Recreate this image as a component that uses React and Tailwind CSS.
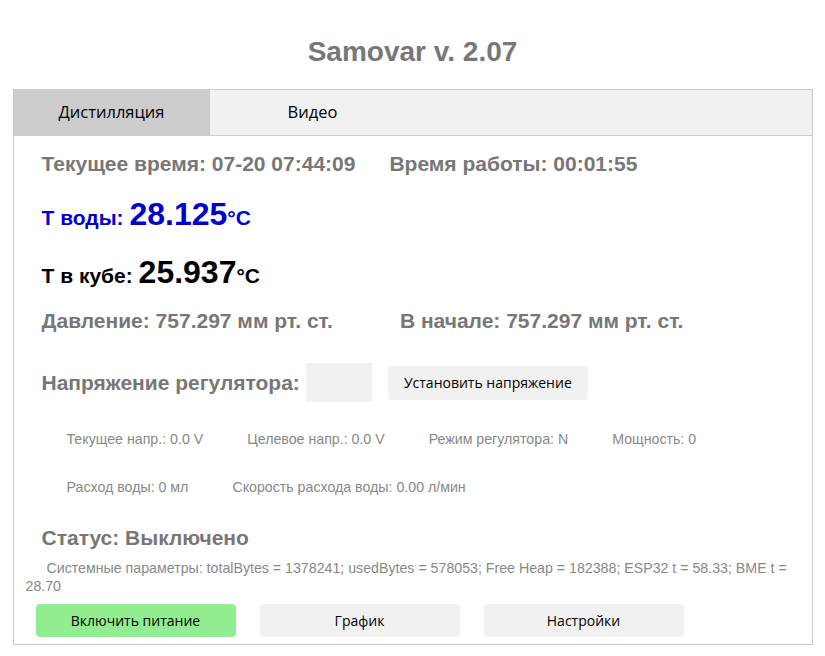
import React from 'react';

const gray = 'text-[#777777]';

const App = () => {
  return (
    <div className="min-h-screen bg-white font-['Liberation_Sans',Arial,sans-serif]">
      <h1 className={`pt-[35px] text-center text-[28px] leading-[34px] font-bold ${gray}`}>Samovar v. 2.07</h1>

      <div className="mx-auto mt-[20px] w-[800px] border border-[#cccccc]">
        {/* Tabs */}
        <div className="flex h-[46px] border-b border-[#cccccc] bg-[#f1f1f1] font-['Open_Sans',sans-serif] text-[16.5px] text-black">
          <button className="w-[196px] bg-[#cccccc]">Дистилляция</button>
          <button className="w-[206px]">Видео</button>
        </div>

        {/* Distillation tab */}
        <div className="pb-[7px]">
          <div className={`mt-[16px] flex h-[24px] gap-[34px] pl-[28px] text-[21px] leading-[24px] font-bold ${gray}`}>
            <span>Текущее время: 07-20 07:44:09</span>
            <span>Время работы: 00:01:55</span>
          </div>

          <div className="mt-[18px] flex h-[40px] items-baseline pl-[28px] font-bold text-[#0000cd]">
            <span className="text-[21px]">Т воды:&nbsp;</span>
            <span className="text-[32px] leading-[40px]">28.125</span>
            <span className="text-[21px]">°C</span>
          </div>

          <div className="mt-[18px] flex h-[40px] items-baseline pl-[28px] font-bold text-black">
            <span className="text-[21px]">Т в кубе:&nbsp;</span>
            <span className="text-[32px] leading-[40px]">25.937</span>
            <span className="text-[21px]">°C</span>
          </div>

          <div className={`mt-[17px] flex h-[24px] gap-[67px] pl-[28px] text-[21px] leading-[24px] font-bold ${gray}`}>
            <span>Давление: 757.297 мм рт. ст.</span>
            <span>В начале: 757.297 мм рт. ст.</span>
          </div>

          <div className="mt-[30px] flex h-[39px] items-center pl-[28px]">
            <span className={`text-[21px] font-bold ${gray}`}>Напряжение регулятора:</span>
            <input className="ml-[6px] h-[39px] w-[66px] bg-[#f1f1f1] outline-none" />
            <button className="ml-[16px] h-[34px] w-[200px] rounded-[4px] bg-[#f1f1f1] font-['Open_Sans',sans-serif] text-[14px] text-black">
              Установить напряжение
            </button>
          </div>

          <div className="mt-[29px] flex h-[16px] gap-[44px] pl-[53px] text-[14.2px] leading-[16px] text-[#888888]">
            <span>Текущее напр.: 0.0 V</span>
            <span>Целевое напр.: 0.0 V</span>
            <span>Режим регулятора: N</span>
            <span>Мощность: 0</span>
          </div>

          <div className="mt-[32px] flex h-[16px] gap-[44px] pl-[53px] text-[14.2px] leading-[16px] text-[#888888]">
            <span>Расход воды: 0 мл</span>
            <span>Скорость расхода воды: 0.00 л/мин</span>
          </div>

          <div className={`mt-[29px] pl-[28px] text-[21px] leading-[28px] font-bold ${gray}`}>Статус: Выключено</div>

          <p className="mt-[7px] pr-[10px] pl-[12px] indent-[21px] text-[14.2px] leading-[18px] text-[#888888]">
            Системные параметры: totalBytes = 1378241; usedBytes = 578053; Free Heap = 182388; ESP32 t = 58.33; BME t = 28.70
          </p>

          <div className="mt-[9px] flex gap-[24px] pl-[22px] font-['Open_Sans',sans-serif] text-[14px] text-black">
            <button className="h-[33px] w-[200px] rounded-[4px] bg-[#90ee90]">Включить питание</button>
            <button className="h-[33px] w-[200px] rounded-[4px] bg-[#f1f1f1]">График</button>
            <button className="h-[33px] w-[200px] rounded-[4px] bg-[#f1f1f1]">Настройки</button>
          </div>
        </div>
      </div>
    </div>
  );
};

export default App;
